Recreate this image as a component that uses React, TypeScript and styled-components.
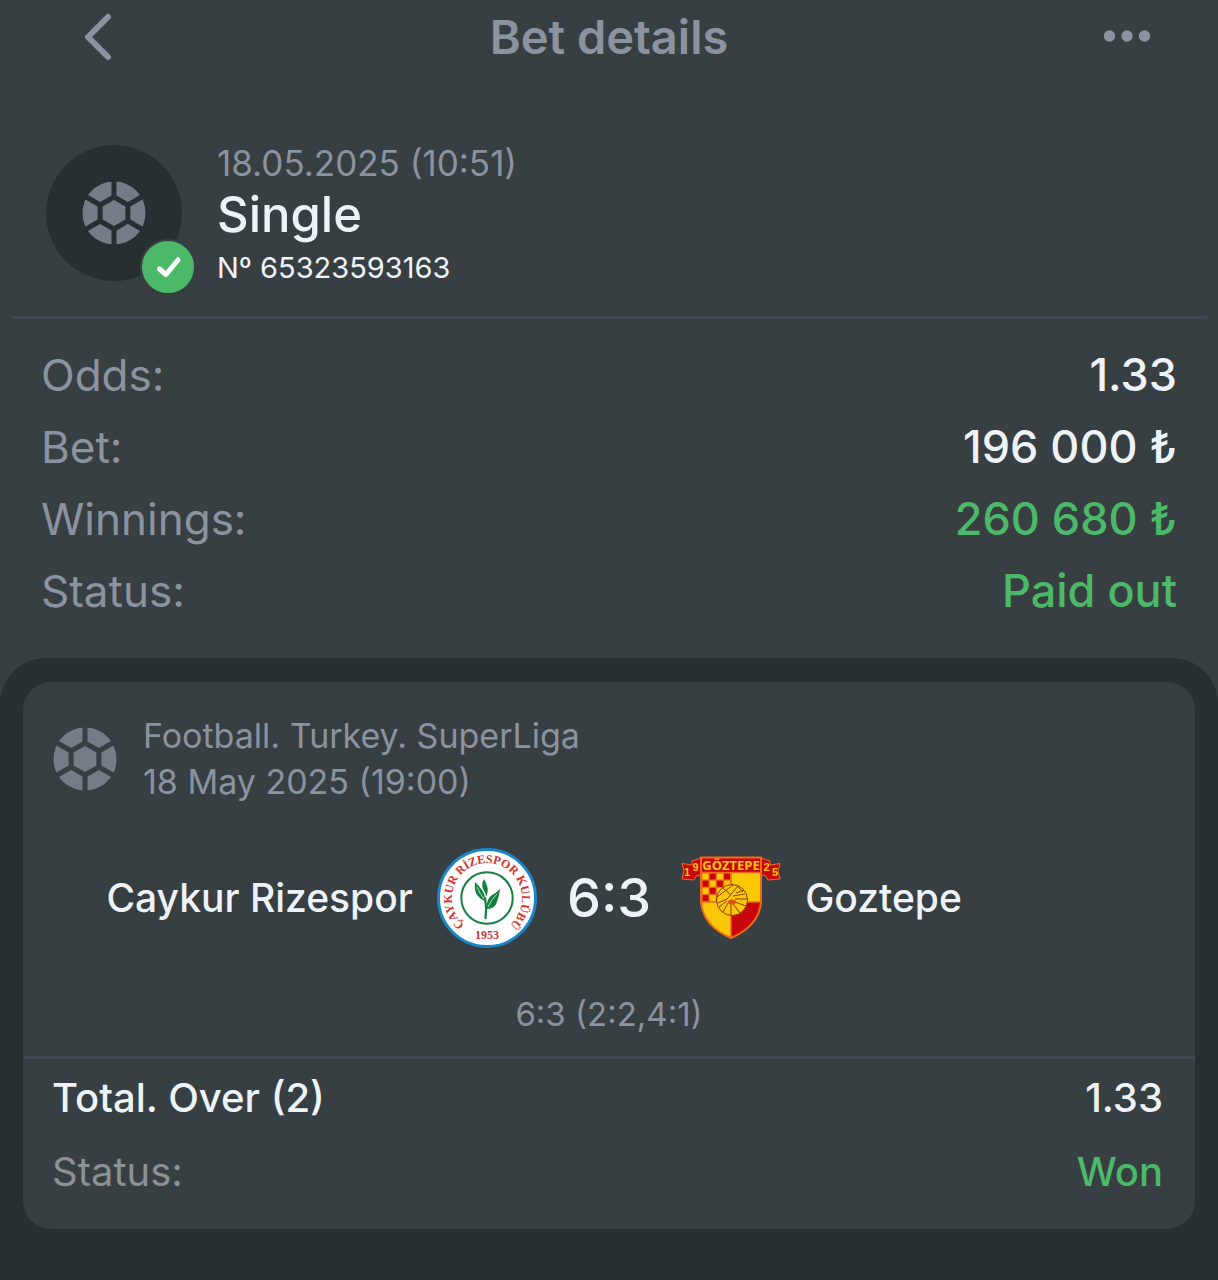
import React, { useId } from "react";
import styled, { createGlobalStyle } from "styled-components";

const color = {
  surface: "#383f42",
  deep: "#282f33",
  line: "#424853",
  text: "#eef3fa",
  muted: "#8b92a0",
  soft: "#8b9195",
  icon: "#747c87",
  green: "#4cb969",
};

const GlobalStyle = createGlobalStyle`
  *, *::before, *::after { box-sizing: border-box; }
  body {
    margin: 0;
    background: ${color.surface};
    color: ${color.text};
    font-family: Inter, Roboto, "Liberation Sans", sans-serif;
  }
  h1, h2, p, dl, dt, dd { margin: 0; font-weight: inherit; }
`;

const Page = styled.main`
  display: flex;
  flex-direction: column;
  min-height: 100vh;
`;

const Header = styled.header`
  display: grid;
  grid-template-columns: 1fr auto 1fr;
  align-items: center;
  height: 74px;
  padding: 0 56px;
`;

const Title = styled.h1`
  && { font-weight: 600; }
  font-size: 47px;
  line-height: 56px;
  color: ${color.muted};
`;

const IconButton = styled.button<{ $end?: boolean }>`
  display: flex;
  align-items: center;
  justify-content: center;
  justify-self: ${(p) => (p.$end ? "end" : "start")};
  padding: 0;
  border: 0;
  background: none;
  color: ${color.muted};
  cursor: pointer;
`;

const Summary = styled.section`
  display: flex;
  align-items: flex-start;
  gap: 35px;
  margin: 0 11px;
  padding: 64px 35px 24px;
  border-bottom: 3px solid ${color.line};
`;

const Avatar = styled.div`
  position: relative;
  display: flex;
  align-items: center;
  justify-content: center;
  flex: none;
  width: 136px;
  height: 136px;
  margin: 7px 0;
  border-radius: 50%;
  background: ${color.deep};
`;

const Badge = styled.span`
  position: absolute;
  right: -14px;
  bottom: -14px;
  display: flex;
  border: 2px solid ${color.surface};
  border-radius: 50%;
  background: ${color.green};
`;

const SummaryText = styled.div`
  display: flex;
  flex-direction: column;
  padding-top: 2px;
`;

const Caption = styled.p`
  font-size: 34px;
  line-height: 46px;
  color: ${color.muted};
`;

const PlacedAt = styled(Caption)`
  font-size: 35px;
`;

const BetType = styled.h2`
  && { font-weight: 500; }
  font-size: 49px;
  line-height: 58px;
`;

const BetNumber = styled.p`
  font-size: 29px;
  line-height: 48px;
`;

const Facts = styled.dl`
  padding: 20px 41px 31px;
`;

const Fact = styled.div`
  display: flex;
  justify-content: space-between;
  font-size: 44px;
  line-height: 72px;
`;

const FactName = styled.dt`
  color: ${color.muted};
`;

const FactValue = styled.dd<{ $good?: boolean }>`
  && { font-weight: 500; }
  font-size: 45px;
  color: ${(p) => (p.$good ? color.green : color.text)};
`;

const Panel = styled.section`
  flex: 1;
  padding: 24px 23px 50px;
  border-radius: 46px 46px 0 0;
  background: ${color.deep};
`;

const Card = styled.article`
  border-radius: 28px;
  background: ${color.surface};
`;

const League = styled.header`
  display: flex;
  align-items: center;
  gap: 26px;
  padding: 31px 30px 0;
`;

const Match = styled.div`
  display: grid;
  grid-template-columns: 1fr auto 1fr;
  align-items: center;
  gap: 30px;
  padding-top: 43px;
`;

const Team = styled.div<{ $home?: boolean }>`
  display: flex;
  align-items: center;
  justify-content: ${(p) => (p.$home ? "flex-end" : "flex-start")};
  gap: 24px;
  font-size: 39px;
  font-weight: 500;
  line-height: 50px;
`;

const Score = styled.strong`
  font-size: 54px;
  font-weight: 500;
  line-height: 60px;
`;

const Halves = styled(Caption)`
  padding: 43px 0 19px;
  font-size: 33px;
  text-align: center;
`;

const Picks = styled.dl`
  padding: 2px 32px 20px 29px;
  border-top: 3px solid ${color.line};
`;

const Pick = styled.div`
  display: flex;
  justify-content: space-between;
  font-size: 40px;
  line-height: 74px;
`;

const PickName = styled.dt<{ $strong?: boolean }>`
  && { font-weight: ${(p) => (p.$strong ? 500 : 400)}; }
  color: ${(p) => (p.$strong ? color.text : color.soft)};
`;

const PickValue = styled(FactValue)`
  font-size: 40px;
`;

const corners = [0, 1, 2, 3, 4, 5].map((i) => {
  const a = (Math.PI / 3) * i - Math.PI / 2;
  return [Math.cos(a), Math.sin(a)];
});

function Ball() {
  const id = useId();
  return (
    <svg width="64" height="64" viewBox="-32 -32 64 64" aria-hidden="true">
      <mask id={id} maskUnits="userSpaceOnUse" x="-32" y="-32" width="64" height="64">
        <circle r="31.7" fill="#fff" />
        <g stroke="#000" strokeWidth="5" fill="none">
          <polygon
            points={corners.map(([x, y]) => `${x * 16},${y * 16}`).join(" ")}
            strokeLinejoin="round"
          />
          {corners.map(([x, y], i) => (
            <line key={i} x1={x * 16} y1={y * 16} x2={x * 34} y2={y * 34} />
          ))}
        </g>
      </mask>
      <circle r="31.7" fill={color.icon} mask={`url(#${id})`} />
    </svg>
  );
}

function RizesporCrest() {
  return (
    <svg width="100" height="100" viewBox="0 0 100 100" role="img" aria-label="Caykur Rizespor crest">
      <circle cx="50" cy="50" r="48.5" fill="#fff" stroke="#1a86c8" strokeWidth="3" />
      <circle cx="50" cy="50" r="25.7" fill="#fff" stroke="#15803f" strokeWidth="2" />
      <path id="rize-name" d="M25.2 74.8 A35 35 0 1 1 74.8 74.8" fill="none" />
      <text fontFamily="Liberation Serif, serif" fontWeight="700" fontSize="12" fill="#d4322f" textAnchor="middle">
        <textPath href="#rize-name" startOffset="50%">ÇAYKUR RİZESPOR KULÜBÜ</textPath>
      </text>
      <text x="50" y="91" fontFamily="Liberation Serif, serif" fontWeight="700" fontSize="12" fill="#d4322f" textAnchor="middle">
        1953
      </text>
      <g fill="#11813c">
        <path d="M38 34 Q37 44 41 48 Q44 52 48 53 Q48 46 45 42 Q42 38 38 34Z" />
        <path d="M47 31 Q44 36 46 41 Q49 45 49 49 Q52 42 50 38 Q49 34 47 31Z" />
        <path d="M63 41 Q59 45 55 47 Q49 51 50 61 Q58 61 60 54 Q62 49 63 41Z" />
        <path d="M48 50 Q50 60 48.5 70" fill="none" stroke="#11813c" strokeWidth="2.2" strokeLinecap="round" />
      </g>
      <path d="M40 39 Q43 46 47 51 M60 46 Q54 52 51 59" stroke="#fff" strokeWidth="0.7" fill="none" />
    </svg>
  );
}

const grid = [0, 1, 2, 3];

function GoztepeCrest() {
  const gold = "#fbc707";
  const red = "#c8060c";
  const edge = "#ee6a1b";
  const seam = "#8d3b0c";
  return (
    <svg width="100" height="100" viewBox="0 -1 100 100" role="img" aria-label="Goztepe crest">
      <g fill={red} stroke={edge} strokeWidth="1">
        <path d="M20 9 L11 12 V16 L1 14.5 L3 22 L1 30 L13 31 L16 26 L20 27Z" />
        <path d="M80 9 L89 12 V16 L99 14.5 L97 22 L99 30 L87 31 L84 26 L80 27Z" />
      </g>
      <g fontFamily="Liberation Sans, sans-serif" fontWeight="700" fontSize="11" fill={gold} textAnchor="middle">
        <text x="6" y="27">1</text>
        <text x="14.500" y="22">9</text>
        <text x="85.500" y="22">2</text>
        <text x="94" y="27">5</text>
      </g>
      <path d="M20 8.5 H80 V53 Q78 77 50 89 Q22 77 20 53Z" fill={gold} />
      <path d="M50 53 H80 Q78 77 50 89Z" fill={red} />
      <path d="M20 8.5 H80 V23.5 H20Z" fill={red} />
      <rect x="21" y="24" width="29" height="29" fill={edge} />
      {grid.map((r) =>
        grid.map((c) => (
          <rect
            key={`${r}-${c}`}
            x={21.5 + c * 7.2}
            y={24.5 + r * 7.2}
            width="6"
            height="6"
            fill={(r + c) % 2 ? red : gold}
          />
        ))
      )}
      <path d="M50 24 V89 M20 53 H80 M20 23.5 H80" stroke={edge} strokeWidth="1.4" />
      <circle cx="51" cy="51" r="15.500" fill={gold} stroke={seam} strokeWidth="1" />
      <g stroke={seam} strokeWidth="1" fill="none">
        <path d="M36 48 L52 36 M37 54 L46 50 L57 37 M42 39 L50 46 M55 44 L63 41 M56 37 L62 43" />
        <path d="M52 47 L64 45 M54 50 L66 50 M54 53 L65 57 M52 55 L59 64 M50 55 L50 66 M47 54 L42 63 M46 52 L38 58" />
      </g>
      <ellipse cx="51" cy="53" rx="4" ry="2.500" fill="#e0501c" />
      <path d="M20 8.5 H80 V53 Q78 77 50 89 Q22 77 20 53Z" fill="none" stroke={edge} strokeWidth="2" />
      <text x="50" y="20.800" fontFamily="Open Sans, sans-serif" fontWeight="700" fontSize="13" fill={gold} textAnchor="middle">
        GÖZTEPE
      </text>
    </svg>
  );
}

const facts = [
  { name: "Odds:", value: "1.33" },
  { name: "Bet:", value: "196 000 ₺" },
  { name: "Winnings:", value: "260 680 ₺", good: true },
  { name: "Status:", value: "Paid out", good: true },
];

export default function App() {
  return (
    <>
      <GlobalStyle />
      <Page>
        <Header>
          <IconButton aria-label="Back">
            <svg width="84" height="52" viewBox="0 0 84 52" fill="none" stroke="currentColor" strokeWidth="6" strokeLinecap="round" strokeLinejoin="round">
              <path d="M52 6 L32 26 L52 46" />
            </svg>
          </IconButton>
          <Title>Bet details</Title>
          <IconButton $end aria-label="More options">
            <svg width="70" height="52" viewBox="0 0 70 52" fill="currentColor">
              <circle cx="17.500" cy="25" r="5.700" />
              <circle cx="35" cy="25" r="5.700" />
              <circle cx="52.500" cy="25" r="5.700" />
            </svg>
          </IconButton>
        </Header>

        <Summary>
          <Avatar>
            <Ball />
            <Badge>
              <svg width="52" height="52" viewBox="0 0 52 52" fill="none" stroke="#fff" strokeWidth="5" strokeLinecap="round" strokeLinejoin="round">
                <path d="M17.500 28 L24 33.500 L36 19" />
              </svg>
            </Badge>
          </Avatar>
          <SummaryText>
            <PlacedAt>18.05.2025 (10:51)</PlacedAt>
            <BetType>Single</BetType>
            <BetNumber>Nº 65323593163</BetNumber>
          </SummaryText>
        </Summary>

        <Facts>
          {facts.map((f) => (
            <Fact key={f.name}>
              <FactName>{f.name}</FactName>
              <FactValue $good={f.good}>{f.value}</FactValue>
            </Fact>
          ))}
        </Facts>

        <Panel>
          <Card>
            <League>
              <Ball />
              <div>
                <Caption>Football. Turkey. SuperLiga</Caption>
                <Caption>18 May 2025 (19:00)</Caption>
              </div>
            </League>
            <Match>
              <Team $home>
                <span>Caykur Rizespor</span>
                <RizesporCrest />
              </Team>
              <Score>6:3</Score>
              <Team>
                <GoztepeCrest />
                <span>Goztepe</span>
              </Team>
            </Match>
            <Halves>6:3 (2:2,4:1)</Halves>
            <Picks>
              <Pick>
                <PickName $strong>Total. Over (2)</PickName>
                <PickValue>1.33</PickValue>
              </Pick>
              <Pick>
                <PickName>Status:</PickName>
                <PickValue $good>Won</PickValue>
              </Pick>
            </Picks>
          </Card>
        </Panel>
      </Page>
    </>
  );
}
